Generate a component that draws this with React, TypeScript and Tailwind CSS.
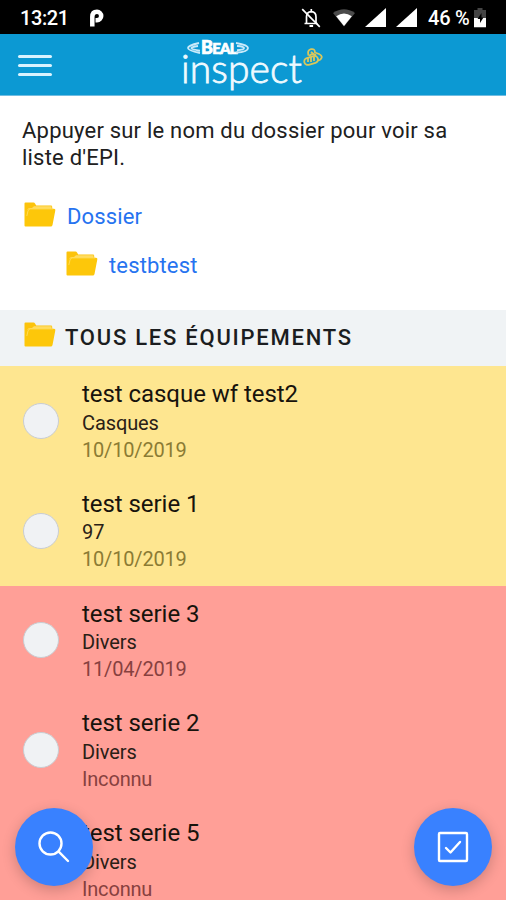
import { clsx } from 'clsx'

type Equipment = {
  name: string
  kind: string
  date: string
  status: 'warning' | 'danger'
}

const equipments: Equipment[] = [
  { name: 'test casque wf test2', kind: 'Casques', date: '10/10/2019', status: 'warning' },
  { name: 'test serie 1', kind: '97', date: '10/10/2019', status: 'warning' },
  { name: 'test serie 3', kind: 'Divers', date: '11/04/2019', status: 'danger' },
  { name: 'test serie 2', kind: 'Divers', date: 'Inconnu', status: 'danger' },
  { name: 'test serie 5', kind: 'Divers', date: 'Inconnu', status: 'danger' },
]

function FolderIcon() {
  return (
    <svg viewBox="0 0 32 25" className="h-[25px] w-8 shrink-0">
      <path d="M.5 1.500Q.5.500 1.500.500H9.500q1 0 1.500 1l1.200 2H27q1.200 0 1.200 1.200V8H.5z" fill="#fcc30c" />
      <path d="M3 8.500Q3.500 6 5.500 6H8l2-1.800H27.500V7.500z" fill="#ffdc60" />
      <path d="M.5 8h3L5 6.800h25q1.700 0 1.300 1.600L28.500 23q-.3 1.500-1.800 1.500H1.500q-1 0-1-1z" fill="#fdc70a" />
      <path d="M2.800 14 4 9Q4.500 6.900 6.500 6.900H29" fill="none" stroke="#ffe06a" strokeWidth=".8" />
    </svg>
  )
}

function SignalIcon() {
  return (
    <svg viewBox="0 0 22 20" className="h-5 w-[22px]">
      <path d="M21 0v19H0z" fill="#fff" />
    </svg>
  )
}

function StatusBar() {
  return (
    <div className="flex h-[34px] items-center bg-black pt-px pl-5 text-xl font-medium text-white">
      <span className="w-[49px] tracking-[-0.4px]">13:21</span>
      <svg viewBox="0 0 16 18" className="ml-[20px] h-[18px] w-4">
        <path d="M3.300 17.500V8Q3.300 2.800 8 2.800A4.200 4.200 0 0 1 8 11.200H6.500" fill="none" stroke="#fff" strokeWidth="4.500" />
      </svg>
      <div className="ml-[196px] flex items-center">
        {/* notifications muted */}
        <svg viewBox="0 0 20 20" className="h-5 w-5" fill="none" stroke="#fff" strokeWidth="1.700">
          <path d="M3.500 15.500h13M5.500 15V9q0-5 4.800-5.300Q15 4 15 9v6M10.300 1v3" />
          <path d="M8.500 18h3.600" strokeWidth="2" />
          <path d="m1.200 1.200 17.600 17.600" />
        </svg>
        <svg viewBox="0 0 22 18" className="ml-3 h-[18px] w-[22px]">
          <path d="M0 4Q11-3.500 22 4L11 17.500z" fill="#4b4b4b" />
          <path d="M3.200 7.200Q11 2 18.800 7.200L11 17z" fill="#fff" />
        </svg>
        <span className="ml-[10px]"><SignalIcon /></span>
        <span className="ml-[9px]"><SignalIcon /></span>
      </div>
      <span className="ml-[10px] w-[44px] whitespace-nowrap text-xl tracking-[-0.2px]">46 %</span>
      <svg viewBox="0 0 12 20" className="ml-[2px] h-5 w-3">
        <path d="M3.500 0h5v2H12v18H0V2h3.500z" fill="#444" />
        <path d="M0 10h12v9H0z" fill="#fff" />
        <path d="m7.500 5-4 6H6v4l3.500-5.500H7.500z" fill="#000" />
      </svg>
    </div>
  )
}

function Logo() {
  return (
    <div className="relative h-[62px] w-[144px]">
      <div className="absolute top-[4px] left-[5px] flex items-center text-white">
        <svg viewBox="0 0 14 12" className="mt-px h-3 w-[14px]" fill="none" stroke="#c9eafa" strokeWidth="1.900">
          <path d="M12 1Q1 3.500 1 6t12 5M11 4Q4 5 4.500 6.200q0 1 8.500 2.500" />
        </svg>
        <span className="w-[35px] text-center text-[15px] leading-[18px] font-black tracking-[-0.8px] [font-family:Lato,sans-serif] [-webkit-text-stroke:0.7px_#fff]">
          <span className="text-[18px]">B</span>EAL
        </span>
        <svg viewBox="0 0 14 12" className="-ml-px h-3 w-[14px]" fill="none" stroke="#c9eafa" strokeWidth="1.900">
          <path d="M1 1q12 2 12 5 0 4-12 4.500M2 4Q9.500 4.500 9 6.200q0 1.500-7 2" />
        </svg>
      </div>
      <div className="absolute top-[12px] -left-px text-[39px] leading-[44px] font-light tracking-[0.100px] text-[#effaff] [font-family:Lato,sans-serif] [-webkit-text-stroke:0.8px_#effaff]">
        inspect
      </div>
      {/* knotted rope */}
      <svg viewBox="0 0 20 18" className="absolute top-[14px] left-[121px] h-[18px] w-5" fill="none" stroke="#d9c75c" strokeWidth="1.800">
        <path d="M5.500 7.500Q4 2 8 1.200T12 4.500L16 6q3.500 1.500 2.500 4-1 2.500-4 2.500" />
        <path d="M6 8q3-3 7-1M8 4l5 4" />
        <rect x="1" y="9" width="14" height="7" rx="3.500" transform="rotate(-16 8 12)" />
        <path d="M5 10v4M8 9v5M11 8.500v4.500" />
      </svg>
    </div>
  )
}

function Header() {
  return (
    <header className="flex h-[62px] border-b border-[#70bde2] bg-[#0c99d3] pl-[18px]">
      <div className="mt-[21px] flex h-[21px] w-[34px] flex-col justify-between">
        <span className="h-[3px] rounded-full bg-[#d9f3ff]" />
        <span className="h-[3px] rounded-full bg-[#d9f3ff]" />
        <span className="h-[3px] rounded-full bg-[#d9f3ff]" />
      </div>
      <div className="ml-[130px]">
        <Logo />
      </div>
    </header>
  )
}

function EquipmentRow({ equipment }: { equipment: Equipment }) {
  return (
    <li
      className={clsx(
        'flex h-[109.750px] items-center pl-[23px]',
        equipment.status === 'warning' ? 'bg-[#fee690]' : 'bg-[#ff9f97]',
      )}
    >
      <span className="size-9 shrink-0 rounded-full border border-[#c9cdd2] bg-[#f0f2f4]" />
      <div className="ml-[23px] pt-px">
        <div className="text-2xl leading-[30px] tracking-[-0.050px] text-[#17130c]">{equipment.name}</div>
        <div className="pt-[0.500px] text-xl leading-[27px] tracking-[-0.100px] text-[#2a2016]">{equipment.kind}</div>
        <div
          className={clsx(
            'text-xl leading-[27px] tracking-[-0.180px]',
            equipment.status === 'warning' ? 'text-[#8b7b34]' : 'text-[#87413f]',
          )}
        >
          {equipment.date}
        </div>
      </div>
    </li>
  )
}

export default function App() {
  return (
    <div className="relative h-[900px] w-[506px] overflow-hidden bg-white [font-family:Roboto,sans-serif]">
      <StatusBar />
      <Header />

      <section className="h-[214px] pt-[21px] pl-[22px]">
        <p className="text-[22px] leading-[27px] tracking-[0.210px] text-[#202020]">
          Appuyer sur le nom du dossier pour voir sa
          <br />
          liste d'EPI.
        </p>
        <div className="mt-[29px] ml-[2px] flex items-center gap-[11px] text-[22px] leading-[30px] text-[#2673f0]">
          <div className="-mt-[4px]"><FolderIcon /></div>
          <span className="pt-[2px] tracking-[0.150px]">Dossier</span>
        </div>
        <div className="mt-[17px] ml-[44px] flex items-center gap-[11px] text-[22px] leading-[30px] text-[#2673f0]">
          <div className="-mt-[4px]"><FolderIcon /></div>
          <span className="pt-[2px] tracking-[0.150px]">testbtest</span>
        </div>
      </section>

      <div className="flex h-14 items-center bg-[#f0f3f5] pl-[24px]">
        <div className="-mt-[8px]"><FolderIcon /></div>
        <h2 className="-mt-px ml-[9px] text-[22px] font-medium tracking-[1.750px] text-[#1b1d20]">TOUS LES ÉQUIPEMENTS</h2>
      </div>

      <ul>
        {equipments.map((equipment) => (
          <EquipmentRow key={equipment.name} equipment={equipment} />
        ))}
      </ul>

      <button className="absolute top-[808px] left-[15px] flex size-[78px] items-center justify-center rounded-full bg-[#3981ff] shadow-[0_4px_14px_rgba(0,0,0,0.2)]">
        <svg viewBox="0 0 32 32" className="size-8" fill="none" stroke="#fff" strokeWidth="2.400" strokeLinecap="round">
          <circle cx="12.500" cy="12.500" r="11" />
          <path d="m20.700 20.700 9.300 9.300" />
        </svg>
      </button>
      <button className="absolute top-[808px] left-[414px] flex size-[78px] items-center justify-center rounded-full bg-[#3981ff] shadow-[0_4px_14px_rgba(0,0,0,0.2)]">
        <svg viewBox="0 0 32 32" className="size-8" fill="none" stroke="#fff" strokeWidth="2.400" strokeLinecap="round" strokeLinejoin="round">
          <rect x="2" y="2" width="28" height="28" rx="1" />
          <path d="m9 17 4.500 4.500L23 11" />
        </svg>
      </button>
    </div>
  )
}
